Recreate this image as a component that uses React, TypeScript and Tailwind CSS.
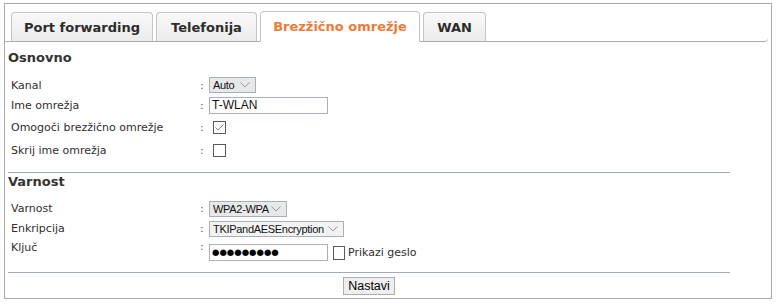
import React from "react";

const ctrlFont = { fontFamily: "'Liberation Sans', Arial, sans-serif" };

const Chevron = () => (
  <svg width="10" height="6" viewBox="0 0 10 6" className="shrink-0">
    <path d="M0.5 0.5 L5 5 L9.5 0.5" fill="none" stroke="#9a9a9a" strokeWidth="1" />
  </svg>
);

function Select({ value, w, bg }: { value: string; w: string; bg: string }) {
  return (
    <div
      className={`flex h-[16px] items-center justify-between border border-[#a7b0b9] pl-[3px] pr-[5px] ${w} ${bg}`}
    >
      <span className="whitespace-nowrap text-[11px] leading-[14px] tracking-[-0.3px] text-[#111]" style={ctrlFont}>
        {value}
      </span>
      <Chevron />
    </div>
  );
}

function Box({ checked }: { checked?: boolean }) {
  return (
    <div className="flex h-[13px] w-[13px] items-center justify-center border border-[#5a5a5a] bg-white">
      {checked && (
        <svg width="9" height="7" viewBox="0 0 9 7">
          <path d="M0.5 3.5 L3 6 L8.5 0.5" fill="none" stroke="#8a8a8a" strokeWidth="1" />
        </svg>
      )}
    </div>
  );
}

function Row({
  label,
  h,
  children,
  top,
}: {
  label: string;
  h: string;
  children: React.ReactNode;
  top?: boolean;
}) {
  return (
    <div className={`flex ${h} ${top ? "items-start" : "items-center"}`}>
      <div className={`w-[192px] pl-[3px] ${top ? "pt-[2px]" : ""}`}>{label}</div>
      <div className={`w-[9px] text-[#3a5a7a] ${top ? "pt-[1px]" : ""}`}>:</div>
      <div className={top ? "pt-[5px]" : ""}>{children}</div>
    </div>
  );
}

export default function App() {
  const tabBase =
    "flex items-center justify-center rounded-t-[4px] border border-b-0 border-[#c5c5c5] text-[13px] font-bold";
  const inactive = "h-[29px] bg-gradient-to-b from-[#f8f8f8] to-[#ececec] text-[#2c2c2c]";
  return (
    <div
      className="bg-white pl-[4px] pt-[3px] text-[11px] leading-[13px] text-[#2e2e2e]"
      style={{ fontFamily: "'DejaVu Sans', Verdana, sans-serif" }}
    >
      <div className="h-[296px] w-[768px] border border-[#ababab] bg-white">
        <div className="mr-[3px] flex h-[38px] items-end gap-[3px] rounded-br-[4px] border-b border-[#ababab] pl-[6px]">
          <div className={`${tabBase} ${inactive} w-[142px]`}>Port forwarding</div>
          <div className={`${tabBase} ${inactive} w-[101px]`}>Telefonija</div>
          <div className={`${tabBase} mb-[-1px] h-[31px] w-[160px] bg-white pb-[2px] text-[#f07a35]`}>
            Brezžično omrežje
          </div>
          <div className={`${tabBase} ${inactive} w-[63px]`}>WAN</div>
        </div>

        <div className="w-[725px] pl-[3px]">
          <div className="mt-[8px] h-[16px] text-[13px] font-bold leading-[16px] text-[#333]">Osnovno</div>
          <div className="mt-[9px]">
            <Row label="Kanal" h="h-[20px]">
              <Select value="Auto" w="w-[47px]" bg="bg-[#e8e8e8]" />
            </Row>
            <Row label="Ime omrežja" h="h-[21px]">
              <div
                className="flex h-[17px] w-[119px] items-center border border-[#a7b0b9] bg-white pl-[2px] text-[12px] text-[#111]"
                style={ctrlFont}
              >
                T-WLAN
              </div>
            </Row>
            <Row label="Omogoči brezžično omrežje" h="h-[23px]">
              <div className="pl-[4px]">
                <Box checked />
              </div>
            </Row>
            <Row label="Skrij ime omrežja" h="h-[23px]">
              <div className="pl-[4px]">
                <Box />
              </div>
            </Row>
          </div>
          <div className="mt-[10px] h-px bg-[#a3adb7]" />
          <div className="mt-[1px] h-[16px] text-[13px] font-bold leading-[16px] text-[#333]">Varnost</div>
          <div className="mt-[9px]">
            <Row label="Varnost" h="h-[19px]">
              <Select value="WPA2-WPA" w="w-[78px]" bg="bg-[#e8e8e8]" />
            </Row>
            <Row label="Enkripcija" h="h-[21px]">
              <Select value="TKIPandAESEncryption" w="w-[135px]" bg="bg-[#f2f2f2]" />
            </Row>
            <Row label="Ključ" h="h-[25px]" top>
              <div className="flex items-center">
                <div className="flex h-[17px] w-[119px] items-center border border-[#a7b0b9] bg-white pl-[2px] text-[8.5px] text-black">
                  ●●●●●●●●●
                </div>
                <div className="ml-[5px] h-[14px] w-[12px] border border-[#5a5a5a] bg-white" />
                <span className="ml-[3px] text-[11px]">Prikazi geslo</span>
              </div>
            </Row>
          </div>
          <div className="mt-[8px] h-px bg-[#a3adb7]" />
          <div className="mt-[4px] flex justify-center">
            <button
              className="h-[18px] w-[52px] border border-[#adadad] bg-[#efefef] text-[12.5px] leading-[16px] text-black"
              style={ctrlFont}
            >
              Nastavi
            </button>
          </div>
        </div>
      </div>
    </div>
  );
}
